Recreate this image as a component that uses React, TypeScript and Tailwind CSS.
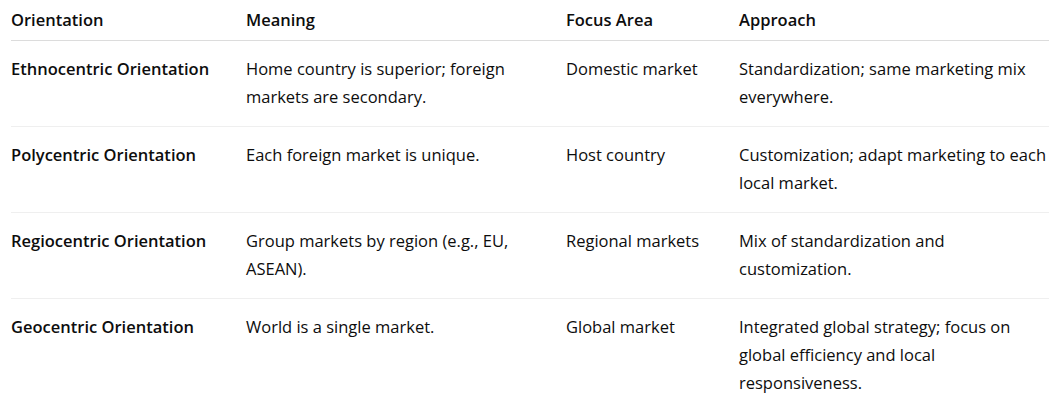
import React from "react"

// cell text split into the lines as they wrap in the design
const rows = [
  {
    o: "Ethnocentric Orientation",
    m: ["Home country is superior; foreign", "markets are secondary."],
    f: "Domestic market",
    a: ["Standardization; same marketing mix", "everywhere."],
  },
  {
    o: "Polycentric Orientation",
    m: ["Each foreign market is unique."],
    f: "Host country",
    a: ["Customization; adapt marketing to each", "local market."],
  },
  {
    o: "Regiocentric Orientation",
    m: ["Group markets by region (e.g., EU,", "ASEAN)."],
    f: "Regional markets",
    a: ["Mix of standardization and", "customization."],
  },
  {
    o: "Geocentric Orientation",
    m: ["World is a single market."],
    f: "Global market",
    a: ["Integrated global strategy; focus on", "global efficiency and local", "responsiveness."],
  },
]

const Lines = ({ lines }: { lines: string[] }) => (
  <>
    {lines.map((l) => (
      <span key={l} className="block whitespace-nowrap">
        {l}
      </span>
    ))}
  </>
)

export default function App() {
  return (
    <div className="bg-white w-[1061px] h-[409px] px-[11px] text-[#0d0d0d] font-['Open_Sans',sans-serif] text-[16.5px] leading-[28px]">
      <table className="w-[1038px] table-fixed border-collapse text-left">
        <colgroup>
          <col className="w-[235px]" />
          <col className="w-[320px]" />
          <col className="w-[173px]" />
          <col className="w-[310px]" />
        </colgroup>
        <thead>
          <tr className="border-b border-[#dcdcdc]">
            <th className="pt-[6px] pb-[6px] font-semibold">Orientation</th>
            <th className="pt-[6px] pb-[6px] font-semibold">Meaning</th>
            <th className="pt-[6px] pb-[6px] font-semibold">Focus Area</th>
            <th className="pt-[6px] pb-[6px] font-semibold">Approach</th>
          </tr>
        </thead>
        <tbody>
          {rows.map((r, i) => (
            <tr key={r.o} className={i < rows.length - 1 ? "border-b border-[#efefef] align-top" : "align-top"}>
              <td className="pt-[14px] pb-[15px] font-semibold whitespace-nowrap">{r.o}</td>
              <td className="pt-[14px] pb-[15px]">
                <Lines lines={r.m} />
              </td>
              <td className="pt-[14px] pb-[15px] whitespace-nowrap">{r.f}</td>
              <td className="pt-[14px] pb-[15px]">
                <Lines lines={r.a} />
              </td>
            </tr>
          ))}
        </tbody>
      </table>
    </div>
  )
}
